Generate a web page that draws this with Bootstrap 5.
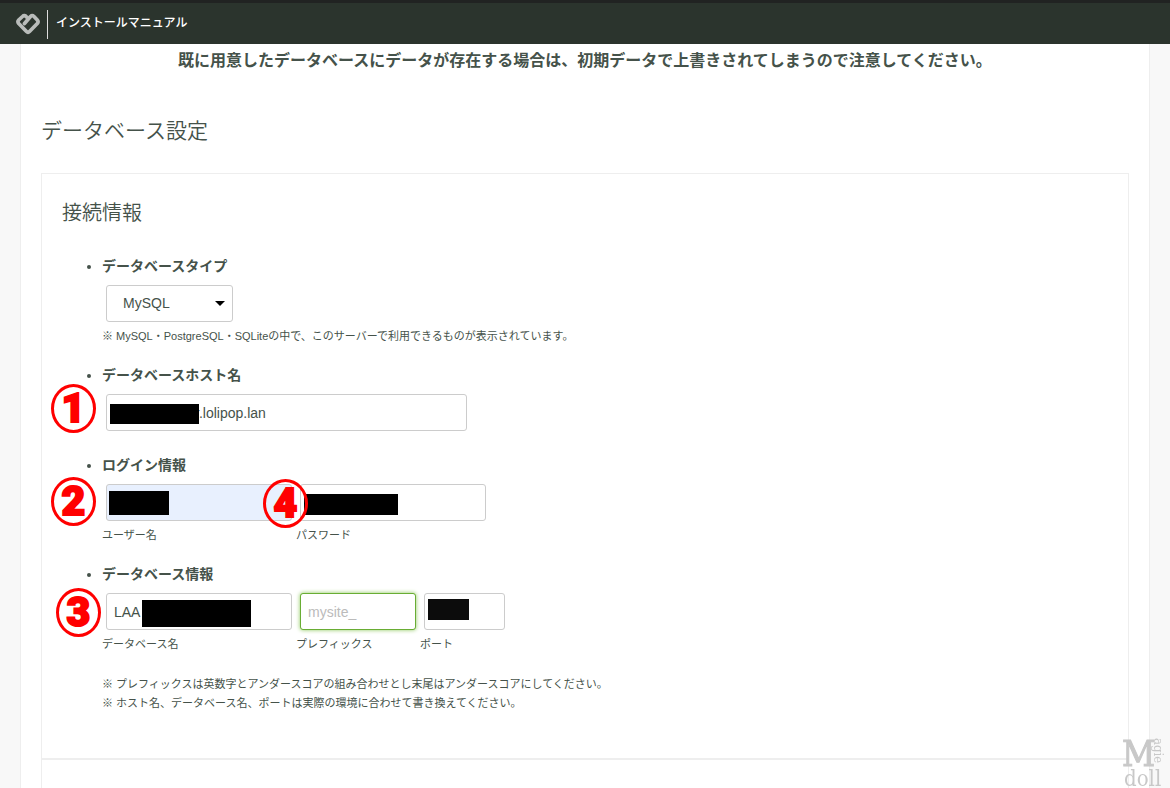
<!DOCTYPE html>
<html lang="ja">
<head>
<meta charset="utf-8">
<meta name="viewport" content="width=device-width, initial-scale=1">
<title>インストールマニュアル</title>
<link href="https://cdn.jsdelivr.net/npm/bootstrap@5.3.0/dist/css/bootstrap.min.css" rel="stylesheet">
<style>
  body { background: #f8f8f8; color: #45524a; font-family: "Liberation Sans", "Noto Sans CJK JP", sans-serif; font-size: 14px; }
  .topbar { height: 44px; background: #2b342d; border-top: 3px solid #212322; padding: 1px 16px 0; }
  .topbar-title { color: #fff; font-size: 12px; font-weight: 500; line-height: 26px; height: 29px; border-left: 1px solid #ddd; padding-left: 8px; margin-left: 7px; }
  .page { margin: 0 20px; padding: 49px 20px 0; background: #fff; border: solid #eee; border-width: 0 1px; }
  .notice { font-size: 16px; line-height: 24px; margin-bottom: 43px; }
  .page-title { font-size: 21px; line-height: 30px; font-weight: 350; margin-bottom: 27px; }
  .panel { border: 1px solid #eee; padding: 24px 20px 45px; }
  .panel-next { border-bottom: 0; }
  .panel-title { font-size: 20px; line-height: 30px; font-weight: 350; margin-bottom: 28px; }
  .fields { padding-left: 40px; margin-bottom: 22px; }
  .fields > li { position: relative; margin-bottom: 20px; }
  .fields > li.no-hint { margin-bottom: 24px; }
  .field-name { display: block; font-weight: 700; line-height: 20px; margin-bottom: 9px; }
  .field-box { position: relative; margin: 0 4px; }
  .field-box .form-control, .field-box .form-select { height: 37px; padding: 0 7px; font-size: 14px; color: #45524a; border: 1px solid #ccc; border-radius: 3px; }
  .field-box .form-select { padding-left: 16px; background: #fff url("data:image/svg+xml,%3Csvg xmlns='http://www.w3.org/2000/svg' width='10' height='5'%3E%3Cpath d='M0 0h10L5 5z'/%3E%3C/svg%3E") no-repeat right 7px center / 10px 5px; }
  .field-box .form-control::placeholder { color: #bbb; }
  .field-box .autofilled { background: #e8f0fe; }
  .field-box .active-field { border-color: #69ad34; box-shadow: 0 0 4px #8cc75a; }
  .field-box .host-input { padding-left: 88px; }
  .w-type { width: 127px; } .w-host { width: 361px; } .w-std { width: 186px; } .w-prefix { width: 116px; } .w-port { width: 81px; }
  .hint { display: block; font-size: 11px; line-height: 18px; margin: 5px 0 0; }
  .notes { font-size: 11px; line-height: 19px; padding-left: 40px; margin: 0; }
  .mask { position: absolute; background: #000; }
  .mask-host { left: 4px; top: 10px; width: 89px; height: 20px; }
  .mask-user { left: 3px; top: 7px; width: 60px; height: 24px; }
  .mask-pass { left: 4px; top: 10px; width: 94px; height: 21px; }
  .mask-db { left: 36px; top: 7px; width: 109px; height: 27px; }
  .mask-port { left: 4px; top: 6px; width: 41px; height: 21px; background: #0c0c0c; }
  .step { position: absolute; z-index: 2; width: 45px; height: 49px; border: 3px solid red; border-radius: 50%; color: red; font: 900 41px/42px Roboto, sans-serif; text-align: center; -webkit-text-stroke: 2px red; }
  .step-1 { left: -51px; top: 19px; } .step-2 { left: -51px; top: 22px; } .step-3 { left: -46px; top: 24px; } .step-4 { left: 161px; top: 24px; }
  .watermark { position: fixed; right: 7px; bottom: 0; color: #c8c8c8; font-family: "DejaVu Serif Condensed", "DejaVu Serif", serif; }
  .wm-initial { width: 31px; margin-left: -2px; font-size: 36px; line-height: 32px; -webkit-text-stroke: 1px #c8c8c8; }
  .wm-side { writing-mode: vertical-rl; font-size: 13px; line-height: 10px; }
  .wm-base { font-size: 22px; line-height: 18px; }
</style>
</head>
<body>
<header class="topbar fixed-top d-flex align-items-center">
  <svg width="24" height="22" viewBox="0 0 24 22" fill="none" stroke="#b9bcba" stroke-width="3.700" stroke-linecap="round" stroke-linejoin="round" aria-hidden="true">
    <path d="M10.500 4Q8.500 1.500 6.500 3.500L2.700 7Q1.200 8.700 2.700 10.500L10.500 18.500Q12 20 13.500 18.500L21.300 10.500Q22.800 8.700 21.300 7L18 3.500Q16.200 1.800 14.500 3.500L8.500 10.500"/>
  </svg>
  <a href="#" class="topbar-title text-decoration-none">インストールマニュアル</a>
</header>

<main class="page d-flex flex-column min-vh-100">
  <p class="notice fw-bold text-center">既に用意したデータベースにデータが存在する場合は、初期データで上書きされてしまうので注意してください。</p>
  <h2 class="page-title">データベース設定</h2>

  <section class="panel">
    <h3 class="panel-title">接続情報</h3>
    <ul class="fields">
      <li>
        <label class="field-name" for="dbType">データベースタイプ</label>
        <div class="field-box w-type"><select id="dbType" class="form-select"><option>MySQL</option></select></div>
        <p class="hint">※ MySQL・PostgreSQL・SQLiteの中で、このサーバーで利用できるものが表示されています。</p>
      </li>
      <li class="no-hint">
        <label class="field-name" for="dbHost">データベースホスト名</label>
        <div class="field-box w-host"><input id="dbHost" type="text" class="form-control host-input" value="r.lolipop.lan"><span class="mask mask-host"></span></div>
        <span class="step step-1">1</span>
      </li>
      <li>
        <span class="field-name">ログイン情報</span>
        <div class="d-flex">
          <div><div class="field-box w-std"><input id="dbUser" type="text" class="form-control autofilled"><span class="mask mask-user"></span></div><label class="hint" for="dbUser">ユーザー名</label></div>
          <div><div class="field-box w-std"><input id="dbPass" type="password" class="form-control"><span class="mask mask-pass"></span></div><label class="hint" for="dbPass">パスワード</label></div>
        </div>
        <span class="step step-2">2</span>
        <span class="step step-4">4</span>
      </li>
      <li>
        <span class="field-name">データベース情報</span>
        <div class="d-flex">
          <div><div class="field-box w-std"><input id="dbName" type="text" class="form-control" value="LAA"><span class="mask mask-db"></span></div><label class="hint" for="dbName">データベース名</label></div>
          <div><div class="field-box w-prefix"><input id="dbPrefix" type="text" class="form-control active-field" placeholder="mysite_"></div><label class="hint" for="dbPrefix">プレフィックス</label></div>
          <div><div class="field-box w-port"><input id="dbPort" type="text" class="form-control"><span class="mask mask-port"></span></div><label class="hint" for="dbPort">ポート</label></div>
        </div>
        <span class="step step-3">3</span>
      </li>
    </ul>
    <p class="notes">※ プレフィックスは英数字とアンダースコアの組み合わせとし末尾はアンダースコアにしてください。<br>※ ホスト名、データベース名、ポートは実際の環境に合わせて書き換えてください。</p>
  </section>
  <section class="panel panel-next flex-grow-1 pb-0"></section>
</main>

<div class="watermark">
  <div class="d-flex"><span class="wm-initial">M</span><span class="wm-side">agie</span></div>
  <div class="wm-base">doll</div>
</div>
<script src="https://cdn.jsdelivr.net/npm/bootstrap@5.3.0/dist/js/bootstrap.bundle.min.js"></script>
</body>
</html>
